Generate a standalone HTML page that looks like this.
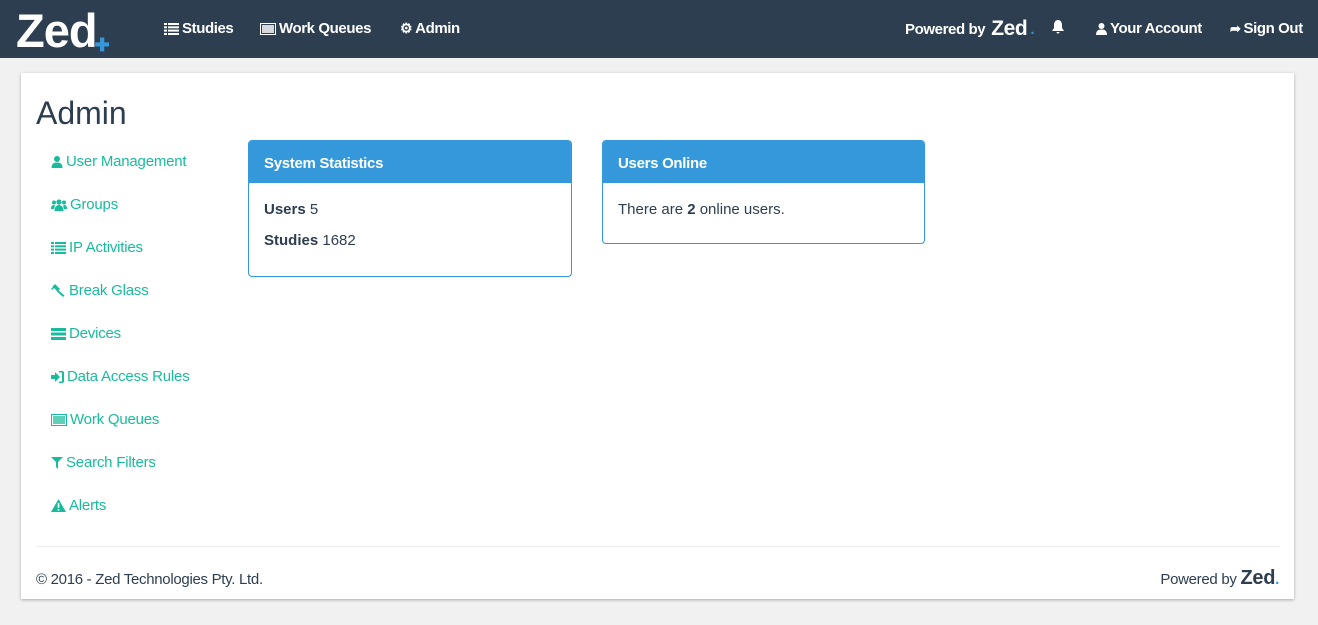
<!DOCTYPE html>
<html><head><meta charset="utf-8"><style>
*{box-sizing:border-box;margin:0;padding:0}
body{width:1318px;height:625px;overflow:hidden;background:#f1f1f1;font-family:"Liberation Sans",sans-serif;font-size:15px;color:#2c3e50}
.nav{position:absolute;left:0;top:0;width:1318px;height:58px;background:#2c3e50;color:#fff}
.nav .it{position:absolute;top:20px;font-size:15px;font-weight:bold;letter-spacing:-0.4px;display:flex;align-items:center;gap:3px;white-space:nowrap}
.logo{position:absolute;left:16px;top:3px;font-size:47px;font-weight:bold;color:#fff;letter-spacing:-1px}
.card{position:absolute;left:21px;top:73px;width:1273px;height:526px;background:#fff;box-shadow:0 1px 3px rgba(0,0,0,.3)}
h1{position:absolute;left:15px;top:22px;font-size:32px;font-weight:normal;color:#2c3e50}
.side a{position:absolute;left:30px;color:#18bc9c;text-decoration:none;display:flex;align-items:center;gap:3px;white-space:nowrap;letter-spacing:-0.2px}
.side svg{fill:#18bc9c}
.panel{position:absolute;border:1px solid #3498db;border-radius:4px;overflow:hidden;background:#fff}
.ph{background:#3498db;color:#fff;font-weight:bold;height:42px;padding:13px 15px 0;letter-spacing:-0.3px}
.pb{padding:17px 15px 0;line-height:31px;margin-top:-8px}
.hr{position:absolute;left:15px;right:15px;top:473px;border-top:1px solid #eee}
.foot{position:absolute;top:498px;font-size:15px;letter-spacing:-0.3px}
</style></head><body>
<div class="nav">
<div class="logo">Zed<span style="color:#3498db;font-size:18px;position:relative;top:4px;left:-2px">✚</span></div>
<div class="it" style="left:164px"><svg width="15" height="12" viewBox="0 0 15 12" fill="#fff"><rect x="0" y="0" width="3" height="2"/><rect x="4" y="0" width="11" height="2"/><rect x="0" y="3.3" width="3" height="2"/><rect x="4" y="3.3" width="11" height="2"/><rect x="0" y="6.6" width="3" height="2"/><rect x="4" y="6.6" width="11" height="2"/><rect x="0" y="10" width="3" height="2"/><rect x="4" y="10" width="11" height="2"/></svg>Studies</div>
<div class="it" style="left:260px"><svg width="16" height="12" viewBox="0 0 16 12"><rect x="0.5" y="0.5" width="15" height="11" fill="none" stroke="#fff"/><rect x="2" y="2" width="12" height="8" fill="#fff" opacity=".8"/></svg>Work Queues</div>
<div class="it" style="left:400px"><span style="font-size:14px">⚙</span>Admin</div>
<div class="it" style="left:905px;top:17px">Powered by <span style="font-size:21px;margin-left:3px">Zed</span><span style="color:#3498db">.</span></div>
<div class="it" style="left:1051px"><svg width="14" height="14" viewBox="0 0 14 14" fill="#fff"><path d="M7 0C4 0 3 3 3 5v3L1 11h12l-2-3V5c0-2-1-5-4-5zM5.5 12a1.5 1.5 0 003 0z"/></svg></div>
<div class="it" style="left:1096px"><svg width="11" height="12" viewBox="0 0 11 12" fill="#fff"><circle cx="5.5" cy="3" r="3"/><path d="M0 12c0-4 2-5.5 5.5-5.5S11 8 11 12z"/></svg>Your Account</div>
<div class="it" style="left:1230px"><span style="font-size:13px">➦</span>Sign Out</div>
</div>
<div class="card">
<h1>Admin</h1>
<div class="side">
<a style="top:80px"><svg width="12" height="12" viewBox="0 0 11 12"><circle cx="5.5" cy="3" r="3"/><path d="M0 12c0-4 2-5.5 5.5-5.5S11 8 11 12z"/></svg>User Management</a>
<a style="top:123px"><svg width="16" height="12" viewBox="0 0 16 12"><circle cx="8" cy="3" r="2.6"/><circle cx="3" cy="3.5" r="2"/><circle cx="13" cy="3.5" r="2"/><path d="M3.5 12c0-4 2-6 4.5-6s4.5 2 4.5 6zM0 10c0-3 1-4 3-4l1 1-1 3zM16 10c0-3-1-4-3-4l-1 1 1 3z"/></svg>Groups</a>
<a style="top:166px"><svg width="15" height="12" viewBox="0 0 15 12"><rect x="0" y="0" width="3" height="2"/><rect x="4" y="0" width="11" height="2"/><rect x="0" y="3.3" width="3" height="2"/><rect x="4" y="3.3" width="11" height="2"/><rect x="0" y="6.6" width="3" height="2"/><rect x="4" y="6.6" width="11" height="2"/><rect x="0" y="10" width="3" height="2"/><rect x="4" y="10" width="11" height="2"/></svg>IP Activities</a>
<a style="top:209px"><svg width="15" height="13" viewBox="0 0 15 13"><path d="M4 0l5 5-2.5 2.5-5-5z"/><path d="M6.5 5.5l7 6-1.5 1.5-6.5-6z"/><path d="M0 5l3-3 1 1-3 3z"/></svg>Break Glass</a>
<a style="top:252px"><svg width="15" height="12" viewBox="0 0 15 12"><rect y="0" width="15" height="3"/><rect y="4.5" width="15" height="3"/><rect y="9" width="15" height="3"/></svg>Devices</a>
<a style="top:295px"><svg width="13" height="12" viewBox="0 0 13 12"><path d="M0 4h4V1l5 5-5 5V8H0z"/><path d="M8 0h3a2 2 0 012 2v8a2 2 0 01-2 2H8v-1.5h3V1.5H8z"/></svg>Data Access Rules</a>
<a style="top:338px"><svg width="16" height="12" viewBox="0 0 16 12"><rect x="0.5" y="0.5" width="15" height="11" fill="none" stroke="#18bc9c"/><rect x="2" y="2" width="12" height="8" opacity=".7"/></svg>Work Queues</a>
<a style="top:381px"><svg width="12" height="12" viewBox="0 0 12 12"><path d="M0 0h12L7 5v7L5 10V5z"/></svg>Search Filters</a>
<a style="top:424px"><svg width="15" height="13" viewBox="0 0 15 13"><path d="M7.5 0L15 13H0z"/><rect x="6.7" y="4" width="1.6" height="5" fill="#fff"/><rect x="6.7" y="10" width="1.6" height="1.6" fill="#fff"/></svg>Alerts</a>
</div>
<div class="panel" style="left:227px;top:67px;width:324px;height:137px"><div class="ph" style="padding-top:14px">System Statistics</div><div class="pb" style="padding-top:19px"><b>Users</b> 5<br><b>Studies</b> 1682</div></div>
<div class="panel" style="left:581px;top:67px;width:323px;height:104px"><div class="ph" style="padding-top:14px">Users Online</div><div class="pb" style="padding-top:19px">There are <b>2</b> online users.</div></div>
<div class="hr"></div>
<div class="foot" style="left:15px">© 2016 - Zed Technologies Pty. Ltd.</div>
<div class="foot" style="right:15px;top:494px">Powered by <span style="font-size:20px;font-weight:bold">Zed</span><span style="color:#3498db;font-weight:bold">.</span></div>
</div>
</body></html>
